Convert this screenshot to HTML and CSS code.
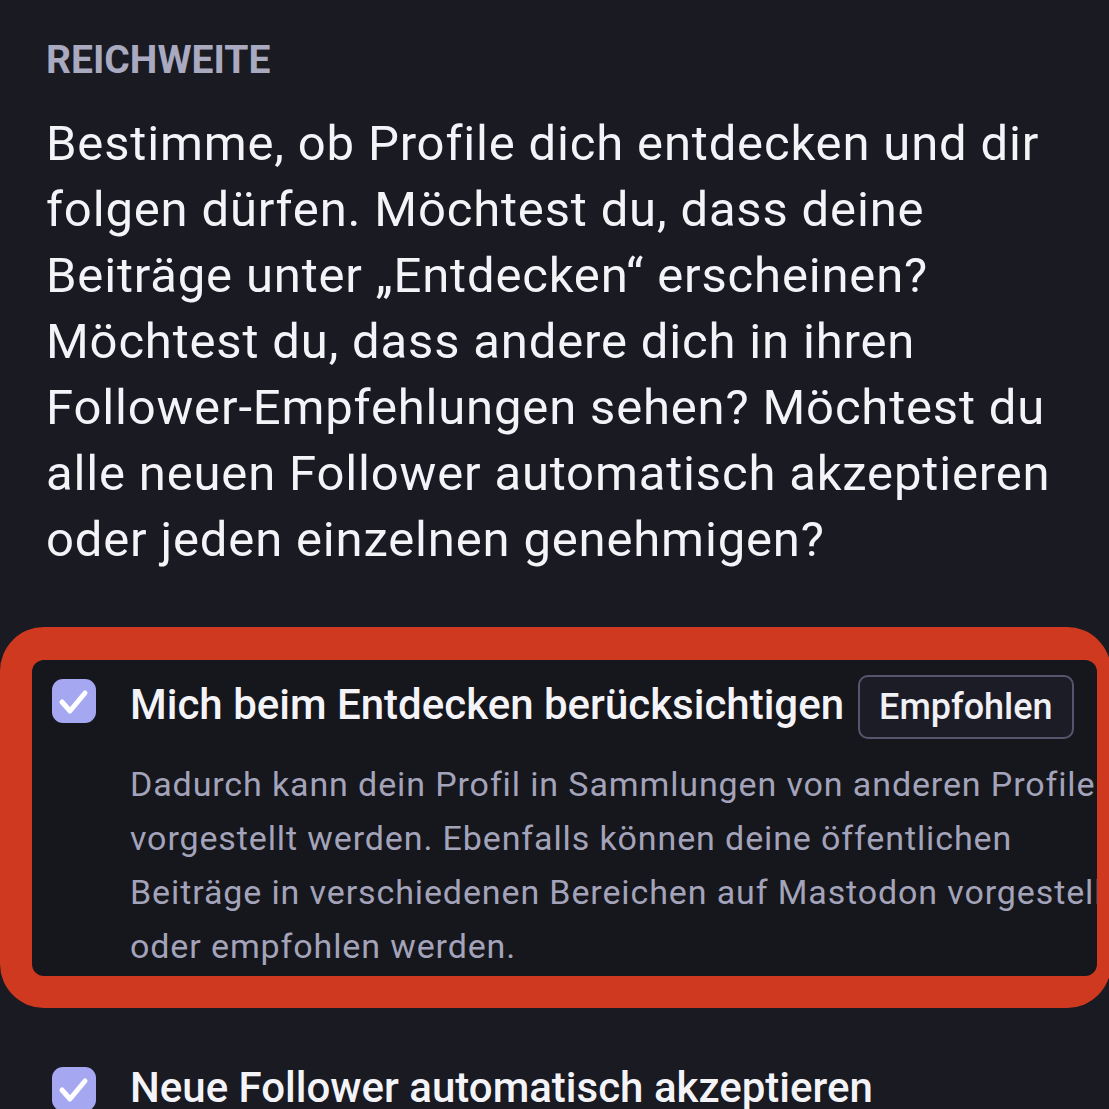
FILE: index.html
```html
<!DOCTYPE html>
<html lang="de">
<head>
    <meta charset="UTF-8">
    <meta name="viewport" content="width=device-width, initial-scale=1.0">
    <title>Privatsphäre und Reichweite</title>
    <link rel="stylesheet" href="styles.css">
</head>
<body>

    <div class="page">
        <h3 class="sectionTitle">Reichweite</h3>

        <p class="lead">Bestimme, ob Profile dich entdecken und dir folgen dürfen. Möchtest du, dass deine Beiträge unter „Entdecken“ erscheinen? Möchtest du, dass andere dich in ihren Follower-Empfehlungen sehen? Möchtest du alle neuen Follower automatisch akzeptieren oder jeden einzelnen genehmigen?</p>

        <!-- Highlighted option -->
        <div class="highlight">
            <div class="option optionBox">
                <span class="checkbox">
                    <svg viewBox="0 0 44 44" width="44" height="44"><path d="M10 23 L18 32 L33 14" fill="none" stroke="#fff" stroke-width="5" stroke-linecap="round" stroke-linejoin="round"/></svg>
                </span>
                <div class="optionBody">
                    <div class="optionHead">
                        <span class="optionLabel">Mich beim Entdecken berücksichtigen</span>
                        <span class="badge">Empfohlen</span>
                    </div>
                    <p class="hint">Dadurch kann dein Profil in Sammlungen von anderen Profilen vorgestellt werden. Ebenfalls können deine öffentlichen Beiträge in verschiedenen Bereichen auf Mastodon vorgestellt oder empfohlen werden.</p>
                </div>
            </div>
        </div>

        <div class="option">
            <span class="checkbox">
                <svg viewBox="0 0 44 44" width="44" height="44"><path d="M10 23 L18 32 L33 14" fill="none" stroke="#fff" stroke-width="5" stroke-linecap="round" stroke-linejoin="round"/></svg>
            </span>
            <div class="optionBody">
                <div class="optionHead">
                    <span class="optionLabel">Neue Follower automatisch akzeptieren</span>
                </div>
            </div>
        </div>
    </div>

</body>
</html>
```

FILE: styles.css
```css
html, body { margin: 0; height: 100%; overflow: hidden; }
body { background: #191a22; font-family: Roboto, "Liberation Sans", sans-serif; color: #f4f4f8; }

.page { padding: 37px 0 0 46px; }

.sectionTitle {
    margin: 0;
    font-size: 39px;
    line-height: 47px;
    font-weight: 700;
    text-transform: uppercase;
    color: #a9a9c0;
}

.lead {
    margin: 27px 0 0;
    font-size: 49px;
    line-height: 66px;
    letter-spacing: 0.017em;
    color: #f4f4f8;
}

/* red outline around the first option */
.highlight {
    margin: 54px -2px 40px -46px;
    padding: 33px 14px 32px 32px;
    background: #cf391f;
    border-radius: 44px;
}

.option {
    display: flex;
    align-items: flex-start;
    gap: 34px;
    padding: 15px 20px 3px;
    margin-left: -14px;
}

.optionBox {
    margin-left: 0;
    background: #16161d;
    border-radius: 12px;
    overflow: hidden;
}

.checkbox {
    flex-shrink: 0;
    width: 44px;
    height: 44px;
    margin-top: 4px;
    background: #a5a7f1;
    border-radius: 11px;
    display: flex;
}

.optionBody { flex-shrink: 0; }

.optionHead {
    display: flex;
    align-items: baseline;
    gap: 14px;
}

.optionLabel {
    font-size: 42px;
    line-height: 50px;
    font-weight: 500;
    color: #f4f4f8;
}

.badge {
    font-size: 36px;
    line-height: 60px;
    font-weight: 500;
    padding: 0 19px;
    border: 2px solid #55566d;
    border-radius: 10px;
    background: #1c1c26;
    color: #f0f0f5;
}

.hint {
    width: 1000px;
    margin: 18px 0 0;
    font-size: 34px;
    line-height: 54px;
    letter-spacing: 0.026em;
    color: #a3a3ba;
}
```
